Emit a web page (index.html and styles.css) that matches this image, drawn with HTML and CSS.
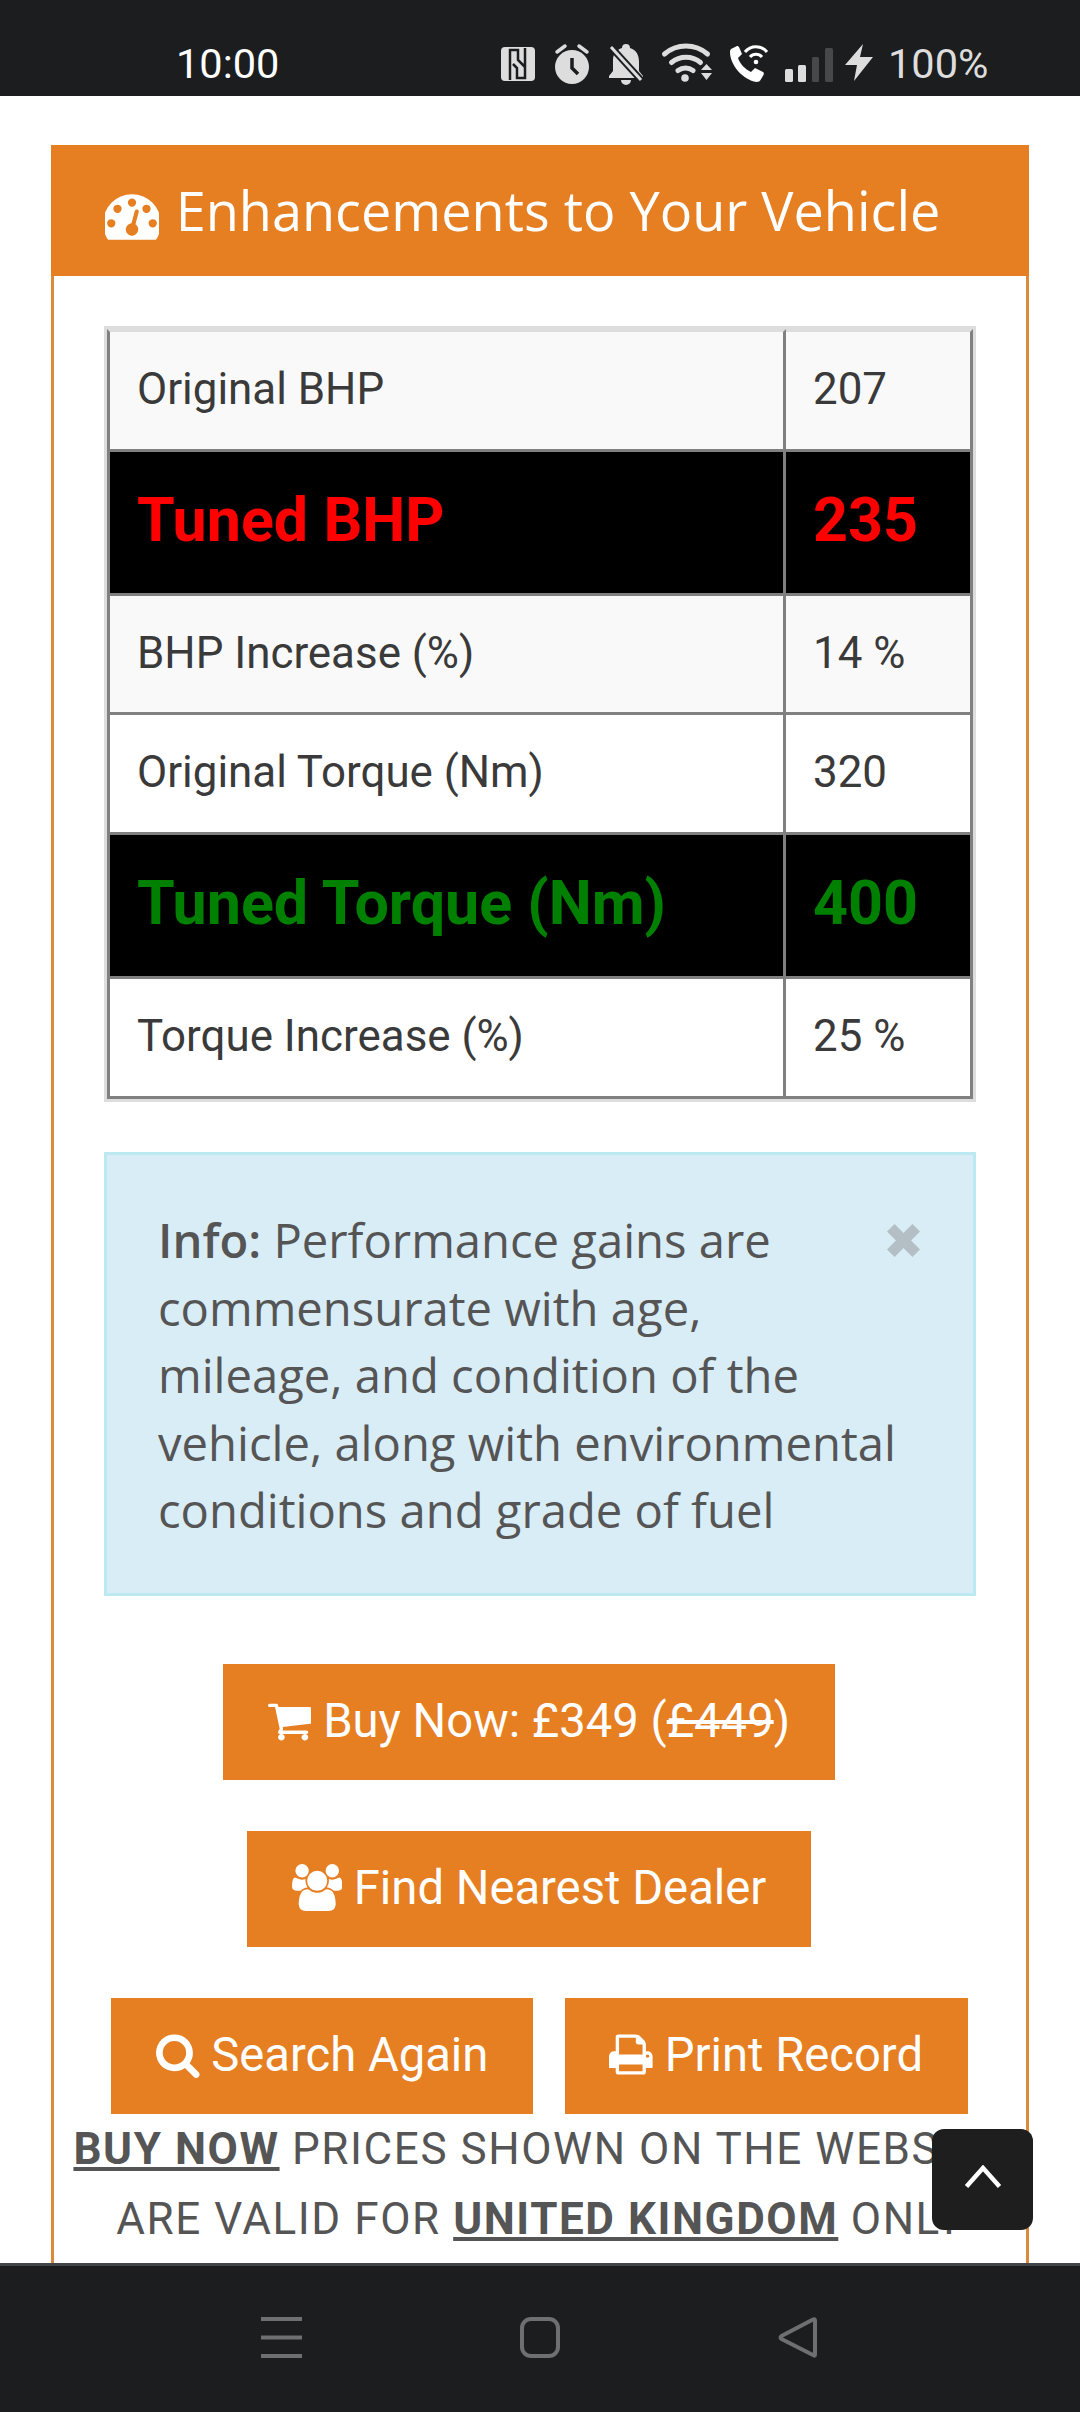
FILE: index.html
```html
<!DOCTYPE html>
<html lang="en">
<head>
<meta charset="utf-8">
<title>Enhancements to Your Vehicle</title>
<link rel="stylesheet" href="styles.css">
</head>
<body>
<div class="phone">
  <header class="statusbar">
    <span class="clock">10:00</span>
    <svg class="status-icons" viewBox="0 0 372 42" fill="#ddd">
      <rect x="0" y="4" width="34" height="34" rx="4"/>
      <path d="M9 37V7h8v10l7 7M24 5v30h-8V25l-4-4" fill="none" stroke="#1c1d1f" stroke-width="2.500"/>
      <g transform="translate(53 0)">
        <circle cx="18" cy="24" r="17"/>
        <path d="M3 9l8-6M33 9l-8-6" stroke="#ddd" stroke-width="3.500" stroke-linecap="round" fill="none"/>
        <path d="M18 15v10l6 6" stroke="#1c1d1f" stroke-width="3.500" fill="none"/>
      </g>
      <g transform="translate(108 0)">
        <path d="M17 1a4 4 0 0 1 4 4c7 2 9 8 9 14v9l4 5v2H0v-2l4-5V17c0-6 3-10 9-12a4 4 0 0 1 4-4zM12 37h10a5 5 0 0 1-10 0z"/>
        <path d="M2 4l30 33" stroke="#1c1d1f" stroke-width="7"/>
        <path d="M2 4l30 33" stroke="#ddd" stroke-width="3"/>
      </g>
      <g transform="translate(161 0)">
        <path d="M2.500 11a33 33 0 0 1 43 0M9.500 19.500a23 23 0 0 1 29 0M16 27.500a13 13 0 0 1 15 0" stroke="#ddd" stroke-width="5" fill="none" stroke-linecap="round"/>
        <circle cx="23" cy="35" r="3.800"/>
        <path d="M39 27h11l-5.500-6zM39 30h11l-5.500 7z"/>
      </g>
      <g transform="translate(227 1)">
        <path d="M3 5l6-3c1 0 1.500 .5 2 1l3 7-4 4c2 6 7 11 13 14l4-4 8 4c1 .5 1 1.500 .5 3l-3 5c-.5 1-2 2-4 2C15 36 2 21 2 8c0-1 .2-2 1-3z" fill="#fff"/>
        <path d="M17 8a14 14 0 0 1 22 0M22 13a8 8 0 0 1 12 0" stroke="#fff" stroke-width="3" fill="none"/>
        <circle cx="28" cy="18" r="2.300" fill="#fff"/>
      </g>
      <g transform="translate(284 0)">
        <rect x="0" y="26" width="8" height="13" rx="1.500"/>
        <rect x="13" y="22" width="8" height="17" rx="1.500"/>
        <rect x="27" y="14" width="7" height="25" rx="1.500" fill="#47484a"/>
        <rect x="40" y="5" width="8" height="34" rx="1.500" fill="#47484a"/>
      </g>
      <path transform="translate(344 0)" d="M18 1L0 22h12L9 38l19-24H15z"/>
    </svg>
    <span class="battery">100%</span>
  </header>

  <main class="viewport">
    <section class="panel">
      <h2 class="panel-title">
        <svg class="icon-title" viewBox="64 0 1664 1792"><path fill="currentColor" d="M384 1152q0-53-37.500-90.500t-90.500-37.500-90.500 37.500-37.500 90.500 37.500 90.500 90.500 37.500 90.500-37.500 37.500-90.500zm192-448q0-53-37.500-90.500t-90.500-37.500-90.500 37.500-37.500 90.500 37.500 90.500 90.500 37.500 90.500-37.500 37.500-90.500zm428 481l101-382q6-26-7.500-48.500t-38.500-29.500-48 6.500-30 39.500l-101 382q-60 5-107 43.500t-63 98.500q-20 77 20 146t117 89 146-20 89-117q16-60-6-117t-72-91zm660-33q0-53-37.500-90.500t-90.500-37.500-90.500 37.500-37.500 90.500 37.500 90.500 90.500 37.500 90.500-37.500 37.500-90.500zm-640-640q0-53-37.500-90.500t-90.500-37.500-90.500 37.500-37.500 90.500 37.500 90.500 90.500 37.500 90.500-37.500 37.500-90.500zm448 192q0-53-37.500-90.500t-90.500-37.500-90.500 37.500-37.500 90.500 37.500 90.500 90.500 37.500 90.500-37.500 37.500-90.500zm320 448q0 261-141 483-19 29-54 29h-1402q-35 0-54-29-141-221-141-483 0-182 71-348t191-286 286-191 348-71 348 71 286 191 191 286 71 348z"/></svg>
        Enhancements to Your Vehicle
      </h2>
      <div class="panel-body">
        <div class="specs-frame">
          <table class="specs">
            <tr class="row-first row-odd"><td>Original BHP</td><td>207</td></tr>
            <tr class="row-big row-red"><td>Tuned BHP</td><td>235</td></tr>
            <tr class="row-third row-odd"><td>BHP Increase (%)</td><td>14 %</td></tr>
            <tr><td>Original Torque (Nm)</td><td>320</td></tr>
            <tr class="row-big row-green"><td>Tuned Torque (Nm)</td><td>400</td></tr>
            <tr><td>Torque Increase (%)</td><td>25 %</td></tr>
          </table>
        </div>

        <div class="alert">
          <p class="alert-text"><strong>Info:</strong> Performance gains are<br>commensurate with age,<br>mileage, and condition of the<br>vehicle, along with environmental<br>conditions and grade of fuel</p>
          <svg class="alert-close" viewBox="3 3 26 26"><path d="M3 9l6-6 7 7 7-7 6 6-7 7 7 7-6 6-7-7-7 7-6-6 7-7z"/></svg>
        </div>

        <div class="actions">
          <a class="btn btn-single">
            <svg class="icon icon-narrow" viewBox="64 0 1664 1792"><path fill="currentColor" d="M704 1536q0 52-38 90t-90 38-90-38-38-90 38-90 90-38 90 38 38 90zm896 0q0 52-38 90t-90 38-90-38-38-90 38-90 90-38 90 38 38 90zm128-1088v512q0 24-16.500 42.500t-40.500 21.500l-1044 122q13 60 13 70 0 16-24 64h920q26 0 45 19t19 45-19 45-45 19h-1024q-26 0-45-19t-19-45q0-11 8-31.500t16-36 21.500-40 15.500-29.500l-177-823h-204q-26 0-45-19t-19-45 19-45 45-19h256q16 0 28.500 6.500t19.500 15.500 13 24.500 8 26 5.500 29.500 4.500 26h1201q26 0 45 19t19 45z"/></svg>
            Buy Now: £349 (<s>£449</s>)
          </a>
          <a class="btn btn-single">
            <svg class="icon icon-wide" viewBox="0 0 1920 1792"><path fill="currentColor" d="M593 896q-162 5-265 128h-134q-82 0-138-40.500t-56-118.500q0-353 124-353 6 0 43.500 21t97.500 42.500 119 21.500q67 0 133-23-5 37-5 66 0 139 81 256zm1071 637q0 120-73 189.500t-194 69.500h-874q-121 0-194-69.500t-73-189.500q0-53 3.500-103.500t14-109 26.500-108.500 43-97.500 62-81 85.500-53.500 111.500-20q10 0 43 21.500t73 48 107 48 135 21.500 135-21.500 107-48 73-48 43-21.500q61 0 111.500 20t85.500 53.500 62 81 43 97.500 26.500 108.500 14 109 3.500 103.500zm-1024-1277q0 106-75 181t-181 75-181-75-75-181 75-181 181-75 181 75 75 181zm704 384q0 159-112.500 271.500t-271.500 112.500-271.500-112.500-112.500-271.500 112.500-271.500 271.500-112.500 271.500 112.500 112.500 271.500zm576 225q0 78-56 118.500t-138 40.500h-134q-103-123-265-128 81-117 81-256 0-29-5-66 66 23 133 23 59 0 119-21.500t97.500-42.500 43.500-21q124 0 124 353zm-128-609q0 106-75 181t-181 75-181-75-75-181 75-181 181-75 181 75 75 181z"/></svg>
            Find Nearest Dealer
          </a>
          <div class="btn-pair">
            <a class="btn">
              <svg class="icon icon-narrow" viewBox="64 0 1664 1792"><path fill="currentColor" d="M1216 832q0-185-131.500-316.500t-316.500-131.500-316.500 131.500-131.500 316.500 131.500 316.500 316.500 131.500 316.500-131.500 131.500-316.500zm512 832q0 52-38 90t-90 38q-54 0-90-38l-343-342q-179 124-399 124-143 0-273.500-55.500t-225-150-150-225-55.500-273.500 55.500-273.500 150-225 225-150 273.500-55.500 273.500 55.500 225 150 150 225 55.500 273.500q0 220-124 399l343 343q37 37 37 90z"/></svg>
              Search Again
            </a>
            <a class="btn">
              <svg class="icon icon-narrow" viewBox="64 0 1664 1792"><path fill="currentColor" d="M448 1536h896v-256h-896v256zm0-640h896v-384h-160q-40 0-68-28t-28-68v-160h-640v640zm1152 64q0-26-19-45t-45-19-45 19-19 45 19 45 45 19 45-19 19-45zm128 0v416q0 13-9.500 22.500t-22.500 9.500h-224v160q0 40-28 68t-68 28h-960q-40 0-68-28t-28-68v-160h-224q-13 0-22.500-9.500t-9.500-22.500v-416q0-79 56.500-135.500t135.500-56.500h64v-544q0-40 28-68t68-28h672q40 0 88 20t76 48l152 152q28 28 48 76t20 88v256h64q79 0 135.500 56.500t56.500 135.500z"/></svg>
              Print Record
            </a>
          </div>
        </div>

        <p class="notice"><strong>BUY NOW</strong> PRICES SHOWN ON THE WEBSITE ARE VALID FOR <strong>UNITED KINGDOM</strong> ONLY</p>
      </div>
    </section>
    <button class="to-top" aria-label="Back to top">
      <svg viewBox="0 0 38 24"><path d="M2.500 21.500L19 3l16.500 18.500" fill="none" stroke="#fff" stroke-width="4.500"/></svg>
    </button>
  </main>

  <footer class="navbar">
    <svg class="nav-icon" viewBox="0 0 41 41"><path d="M0 2h41M0 20.500h41M0 39h41" stroke="#6e6f71" stroke-width="4" fill="none"/></svg>
    <svg class="nav-icon" viewBox="0 0 41 41"><rect x="2" y="2" width="36" height="37" rx="9" fill="none" stroke="#6e6f71" stroke-width="4"/></svg>
    <svg class="nav-icon" viewBox="0 0 41 41"><path d="M37 3.500v34q0 2-2 .500L3.500 22q-2-1.500 0-3L35 2.500q2-1 2 1z" fill="none" stroke="#6e6f71" stroke-width="4" stroke-linejoin="round"/></svg>
  </footer>
</div>
</body>
</html>
```

FILE: styles.css
```css
* { box-sizing: border-box; }
html, body { margin: 0; padding: 0; }
body { background: #fff; font-family: Roboto, "Liberation Sans", sans-serif; color: #3a3a3a; }

.phone { width: 1080px; height: 2412px; display: flex; flex-direction: column; overflow: hidden; }

.statusbar { height: 96px; flex: none; background: #1c1d1f; display: flex; align-items: center; padding: 32px 0 0 176px; }
.clock { font-size: 41.500px; color: #fff; width: 325px; line-height: 48px; }
.status-icons { width: 372px; height: 42px; flex: none; }
.battery { margin-left: 15px; font-size: 41.500px; color: #ddd; line-height: 48px; }

.viewport { flex: 1; min-height: 0; position: relative; overflow: hidden; padding: 49px 51px 0; }

.panel { border: 3px solid #d98a3d; border-top: 0; }
.panel-title { margin: 0 -3px; height: 131px; background: #e67e22; color: #fff; font: 400 54px/131px "Open Sans", sans-serif; padding-left: 53.700px; white-space: nowrap; }
.icon-title { width: 54px; height: 58px; vertical-align: -13px; margin-right: 3px; }

.panel-body { padding: 50px 50px 120px; }

.specs-frame { border: 3px solid #ddd; }
.specs { width: 100%; border-collapse: separate; border-spacing: 0; table-layout: fixed; font-size: 43.900px; }
.specs td { border-right: 3px solid #808080; border-bottom: 3px solid #808080; height: 120px; padding: 0 0 3px 27px; background: #fff; }
.specs td:first-child { border-left: 3px solid #808080; }
.specs td:last-child { width: 187px; }
.row-first td { border-top: 3px solid #ddd; height: 123px !important; }
.row-third td { height: 119px !important; }
.row-odd td { background: #f9f9f9; }
.specs .row-big td { background: #000; height: 144px; font-size: 61px; font-weight: 700; padding-bottom: 6px; }
.row-red td { color: #f00; }
.row-green td { color: #008000; }

.alert { margin-top: 50px; border: 3px solid #bce8f1; background: #d9edf7; padding: 52px 53px 50px 51px; display: flex; justify-content: space-between; align-items: flex-start; height: 444px; }
.alert-text { margin: 0; flex: 1; min-width: 0; font: 400 47.200px/67.500px "Open Sans", sans-serif; color: #555; white-space: nowrap; }
.alert-text strong { font-weight: 600; }
.alert-close { width: 33px; height: 33px; fill: #b3bfc5; margin-top: 17px; flex: none; }

.actions { margin-top: 68px; display: flex; flex-direction: column; align-items: center; gap: 51px; }
.btn { display: block; height: 116px; padding: 0 44.500px; background: #e67e22; color: #fff; font-size: 47.200px; line-height: 115px; white-space: nowrap; }
.btn-single { margin-right: 22px; }
.icon { height: 47px; vertical-align: -6.700px; }
.icon-narrow { width: 43.600px; }
.icon-wide { width: 50.400px; }
.btn-pair { display: flex; gap: 32px; margin-right: 1px; }

.notice { margin: 0 -50px; text-align: center; font-size: 44px; line-height: 70px; letter-spacing: 1.570px; color: #555; }
.notice strong { text-decoration: underline; }

.to-top { position: absolute; left: 932px; top: 2033px; width: 101px; height: 101px; border: 0; border-radius: 12px; background: #1e1e1e; padding: 0; display: flex; align-items: center; justify-content: center; }
.to-top svg { width: 38px; height: 24px; margin-bottom: 6px; }

.navbar { height: 149px; flex: none; background: #1c1d1f; border-top: 3px solid #3f4448; display: flex; padding-top: 51px; align-items: flex-start; }
.nav-icon { width: 41px; height: 41px; flex: none; }
.nav-icon:nth-child(1) { margin-left: 261px; }
.nav-icon:nth-child(2) { margin-left: 218px; }
.nav-icon:nth-child(3) { margin-left: 217px; }
```
